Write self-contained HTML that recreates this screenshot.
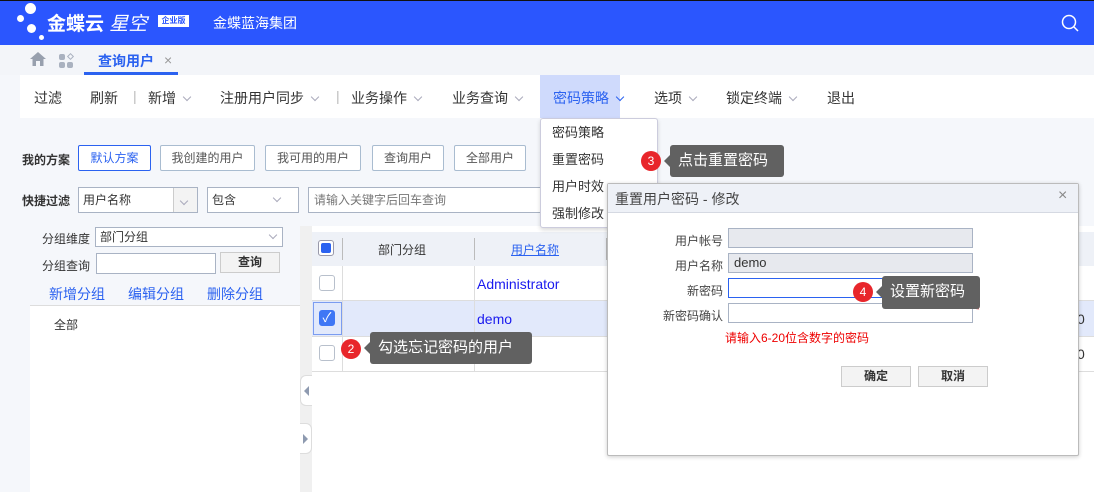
<!DOCTYPE html>
<html><head><meta charset="utf-8"><style>
*{margin:0;padding:0;box-sizing:border-box}
body{width:1094px;height:492px;overflow:hidden;position:relative;background:#f5f7fb;font-family:"Liberation Sans","Noto Sans CJK SC",sans-serif;font-size:13px;color:#333}
.a{position:absolute}
.btn{position:absolute;top:145px;height:26px;border:1px solid #a9bcd0;background:#fff;color:#555;font-size:12px;text-align:center;line-height:24px;border-radius:2px}
.chev{display:inline-block;width:6px;height:6px;border-right:1px solid #aab;border-bottom:1px solid #aab;transform:rotate(45deg);margin-left:8px;position:relative;top:-3px}
.tb span{position:absolute;top:88px;font-size:14px;color:#333}
.cb{position:absolute;width:16px;height:16px;border:1px solid #b8c0cc;border-radius:3px;background:#fff}
.tip{position:absolute;background:#616161;color:#fff;font-size:15px;border-radius:3px;height:32px;line-height:32px;padding:0 8px}
.tip:before{content:"";position:absolute;left:-6px;top:10px;border:6px solid transparent;border-left:0;border-right-color:#616161}
.num{position:absolute;width:20px;height:20px;border-radius:50%;background:#e8262b;color:#fff;font-size:12px;text-align:center;line-height:20px}
.lbl{position:absolute;font-size:12px;color:#444;text-align:right;width:120px}
.inp{position:absolute;left:728px;width:245px;height:20px;border:1px solid #a9b3c4;background:#e7e9ee}
</style></head><body>
<!-- header -->
<div class="a" style="left:0;top:0;width:1094px;height:45px;background:#2b56fe;border-top:1px solid #111"></div>
<div class="a" style="left:25px;top:3px;width:11px;height:11px;border-radius:50%;background:#fff"></div>
<div class="a" style="left:17px;top:15px;width:7px;height:7px;border-radius:50%;background:#fff"></div>
<div class="a" style="left:27px;top:24px;width:9px;height:9px;border-radius:50%;background:#fff"></div>
<div class="a" style="left:39px;top:35px;width:5px;height:5px;border-radius:50%;background:#fff"></div>
<div class="a" style="left:47px;top:9px;color:#fff;font-size:19px;font-weight:bold">金蝶云 <span style="font-weight:normal;font-style:italic">星空</span></div>
<div class="a" style="left:158px;top:15px;width:31px;height:12px;background:#fff;color:#2b56fe;font-size:8px;line-height:12px;text-align:center;font-weight:bold">企业版</div>
<div class="a" style="left:213px;top:13px;color:#fff;font-size:14px">金蝶蓝海集团</div>
<svg class="a" style="left:1060px;top:13px" width="20" height="20"><circle cx="9" cy="9" r="6.5" fill="none" stroke="#fff" stroke-width="1.5"/><line x1="14" y1="14" x2="18" y2="18" stroke="#fff" stroke-width="1.5"/></svg>
<!-- tabs -->
<div class="a" style="left:0;top:45px;width:1094px;height:30px;background:#f3f5f9"></div>
<svg class="a" style="left:29px;top:51px" width="18" height="16"><path d="M9 1 L1 8 H3.5 V15 H7 V10 H11 V15 H14.5 V8 H17Z" fill="#98a0ae"/></svg>
<div class="a" style="left:59px;top:54px;width:6px;height:6px;border-radius:2px;background:#aab2c0"></div>
<div class="a" style="left:59px;top:62px;width:6px;height:6px;border-radius:2px;background:#aab2c0"></div>
<div class="a" style="left:67px;top:62px;width:6px;height:6px;border-radius:2px;background:#aab2c0"></div>
<div class="a" style="left:68px;top:54px;width:5px;height:5px;border:1px solid #aab2c0;transform:rotate(45deg)"></div>
<div class="a" style="left:98px;top:51px;color:#2b62f0;font-size:14px;font-weight:bold">查询用户</div>
<div class="a" style="left:164px;top:52px;color:#999;font-size:14px">×</div>
<div class="a" style="left:84px;top:72px;width:94px;height:3px;background:#2b62f0"></div>
<!-- toolbar -->
<div class="a" style="left:20px;top:75px;width:1074px;height:43px;background:#fff"></div>
<div class="a" style="left:540px;top:75px;width:80px;height:43px;background:#cfdafc"></div>
<div class="tb">
<span style="left:34px">过滤</span><span style="left:90px">刷新</span><span style="left:133px;color:#bbb">|</span>
<span style="left:148px">新增<i class="chev"></i></span>
<span style="left:220px">注册用户同步<i class="chev"></i></span><span style="left:336px;color:#bbb">|</span>
<span style="left:351px">业务操作<i class="chev"></i></span>
<span style="left:452px">业务查询<i class="chev"></i></span>
<span style="left:553px;color:#2b62f0">密码策略<i class="chev" style="border-color:#2b62f0"></i></span>
<span style="left:654px">选项<i class="chev"></i></span>
<span style="left:726px">锁定终端<i class="chev"></i></span>
<span style="left:827px">退出</span>
</div>
<!-- scheme -->
<div class="a" style="left:22px;top:151px;font-size:12px;font-weight:bold;color:#333">我的方案</div>
<div class="btn" style="left:78px;width:73px;border-color:#2b62f0;color:#2b62f0">默认方案</div>
<div class="btn" style="left:160px;width:95px">我创建的用户</div>
<div class="btn" style="left:265px;width:96px">我可用的用户</div>
<div class="btn" style="left:372px;width:72px">查询用户</div>
<div class="btn" style="left:454px;width:72px">全部用户</div>
<div class="a" style="left:22px;top:192px;font-size:12px;font-weight:bold">快捷过滤</div>
<div class="a" style="left:78px;top:187px;width:120px;height:26px;border:1px solid #a9b3c4;background:#fff;font-size:12px;line-height:24px;padding-left:4px">用户名称</div>
<div class="a" style="left:173px;top:188px;width:24px;height:24px;background:#f3f3f3;border-left:1px solid #ccc"><i class="chev" style="margin-left:7px;top:4px"></i></div>
<div class="a" style="left:207px;top:187px;width:92px;height:26px;border:1px solid #a9b3c4;background:#fff;font-size:12px;line-height:24px;padding-left:4px">包含<i class="chev" style="margin-left:38px"></i></div>
<div class="a" style="left:308px;top:187px;width:240px;height:26px;border:1px solid #a9b3c4;background:#fff;font-size:12px;line-height:24px;padding-left:5px;color:#777">请输入关键字后回车查询</div>
<!-- left panel -->
<div class="a" style="left:20px;top:226px;width:280px;height:266px;background:#f5f7fb"></div>
<div class="a" style="left:42px;top:230px;font-size:12px">分组维度</div>
<div class="a" style="left:95px;top:227px;height:20px;border:1px solid #a9b3c4;background:#fff;width:188px;font-size:12px;line-height:18px;padding-left:4px">部门分组<i class="chev" style="margin-left:122px"></i></div>
<div class="a" style="left:42px;top:257px;font-size:12px">分组查询</div>
<div class="a" style="left:96px;top:253px;width:120px;height:21px;border:1px solid #a9b3c4;background:#fff"></div>
<div class="a" style="left:220px;top:252px;width:60px;height:21px;border:1px solid #ccc;background:#f3f3f3;font-size:12px;text-align:center;line-height:19px;font-weight:bold">查询</div>
<div class="a" style="left:30px;top:280px;width:270px;height:25px;background:#f5f7fb;font-size:14px;color:#2b62f0;line-height:25px"></div>
<div class="a" style="left:49px;top:284px;font-size:14px;color:#2b62f0">新增分组</div>
<div class="a" style="left:128px;top:284px;font-size:14px;color:#2b62f0">编辑分组</div>
<div class="a" style="left:207px;top:284px;font-size:14px;color:#2b62f0">删除分组</div>
<div class="a" style="left:30px;top:305px;width:270px;height:187px;background:#fff;border-top:1px solid #ddd"></div>
<div class="a" style="left:54px;top:316px;font-size:12px">全部</div>
<div class="a" style="left:300px;top:226px;width:12px;height:266px;background:#f0f0f0"></div>
<div class="a" style="left:300px;top:375px;width:12px;height:31px;background:#fff;border:1px solid #ddd;border-right:0;border-radius:6px 0 0 6px"></div>
<div class="a" style="left:304px;top:386px;border:5px solid transparent;border-left:0;border-right-color:#8e9ab0"></div>
<div class="a" style="left:300px;top:423px;width:12px;height:31px;background:#fff;border:1px solid #ddd;border-left:0;border-radius:0 6px 6px 0"></div>
<div class="a" style="left:303px;top:434px;border:5px solid transparent;border-right:0;border-left-color:#8e9ab0"></div>
<!-- grid -->
<div class="a" style="left:312px;top:226px;width:782px;height:266px;background:#fff"></div>
<div class="a" style="left:312px;top:232px;width:782px;height:34px;background:#eef1f7"></div>
<div class="a" style="left:312px;top:301px;width:782px;height:35px;background:#e2e9fb"></div>
<div class="a" style="left:312px;top:300px;width:782px;height:1px;background:#ddd"></div>
<div class="a" style="left:312px;top:336px;width:782px;height:1px;background:#ddd"></div>
<div class="a" style="left:312px;top:371px;width:782px;height:1px;background:#ddd"></div>
<div class="a" style="left:342px;top:266px;width:1px;height:106px;background:#ddd"></div>
<div class="a" style="left:474px;top:266px;width:1px;height:106px;background:#ddd"></div>
<div class="a" style="left:342px;top:238px;width:1px;height:22px;background:#bbb"></div>
<div class="a" style="left:474px;top:238px;width:1px;height:22px;background:#bbb"></div>
<div class="a" style="left:606px;top:238px;width:1px;height:22px;background:#bbb"></div>
<div class="cb" style="left:318px;top:240px;border-color:#99a"><div style="margin:2px;width:10px;height:10px;background:#2b62f0;border-radius:2px"></div></div>
<div class="a" style="left:378px;top:241px;font-size:12px">部门分组</div>
<div class="a" style="left:511px;top:241px;font-size:12px;color:#2b62f0;text-decoration:underline">用户名称</div>
<div class="cb" style="left:319px;top:275px"></div>
<div class="a" style="left:313px;top:302px;width:29px;height:33px;border:1px solid #7b9cf0"></div>
<div class="cb" style="left:319px;top:310px;background:#3f77f5;border-color:#3f77f5;color:#fff;font-size:13px;line-height:14px;text-align:center">✓</div>
<div class="cb" style="left:319px;top:345px"></div>
<div class="a" style="left:477px;top:276px;font-size:14px;color:#1a1aee">Administrator</div>
<div class="a" style="left:477px;top:311px;font-size:14px;color:#1a1aee">demo</div>
<div class="a" style="left:478px;top:345px;font-size:14px;color:#223">test</div>
<div class="a" style="left:1077px;top:311px;font-size:14px">0</div>
<div class="a" style="left:1077px;top:346px;font-size:14px">0</div>
<!-- tip 2 -->
<div class="num" style="left:341px;top:339px">2</div>
<div class="tip" style="left:370px;top:332px;width:162px">勾选忘记密码的用户</div>
<!-- dropdown -->
<div class="a" style="left:540px;top:118px;width:118px;height:110px;background:#fff;border:1px solid #ccd;border-radius:3px;box-shadow:0 2px 4px rgba(0,0,0,.15)"></div>
<div class="a" style="left:552px;top:119px;font-size:13px;line-height:27px">密码策略<br>重置密码<br>用户时效<br>强制修改</div>
<div class="num" style="left:641px;top:151px">3</div>
<div class="tip" style="left:670px;top:145px;width:114px">点击重置密码</div>
<!-- dialog -->
<div class="a" style="left:607px;top:183px;width:472px;height:273px;background:#fff;border:1px solid #bbb;border-radius:2px;box-shadow:0 1px 4px rgba(0,0,0,.2)"></div>
<div class="a" style="left:608px;top:184px;width:470px;height:29px;background:#eef1f7;border-bottom:1px solid #d5d9e2"></div>
<div class="a" style="left:615px;top:189px;font-size:14px;color:#444">重置用户密码 - 修改</div>
<div class="a" style="left:1058px;top:187px;font-size:16px;color:#888">×</div>
<div class="lbl" style="left:603px;top:232px">用户帐号</div>
<div class="lbl" style="left:603px;top:257px">用户名称</div>
<div class="lbl" style="left:603px;top:282px">新密码</div>
<div class="lbl" style="left:603px;top:307px">新密码确认</div>
<div class="inp" style="top:228px"></div>
<div class="inp" style="top:253px;font-size:13px;line-height:18px;padding-left:5px">demo</div>
<div class="inp" style="top:278px;background:#fff;border-color:#2b62f0"></div>
<div class="inp" style="top:303px;background:#fff"></div>
<div class="a" style="left:976px;top:280px;color:#c22;font-size:10px">*</div>
<div class="a" style="left:976px;top:305px;color:#c22;font-size:10px">*</div>
<div class="a" style="left:725px;top:329px;color:#e00;font-size:12px">请输入6-20位含数字的密码</div>
<div class="a" style="left:841px;top:366px;width:70px;height:21px;border:1px solid #ccc;background:#f3f3f3;text-align:center;line-height:19px;font-size:12px;font-weight:bold">确定</div>
<div class="a" style="left:918px;top:366px;width:70px;height:21px;border:1px solid #ccc;background:#f3f3f3;text-align:center;line-height:19px;font-size:12px;font-weight:bold">取消</div>
<div class="num" style="left:853px;top:282px">4</div>
<div class="tip" style="left:882px;top:276px;width:98px;height:33px">设置新密码</div>
</body></html>
